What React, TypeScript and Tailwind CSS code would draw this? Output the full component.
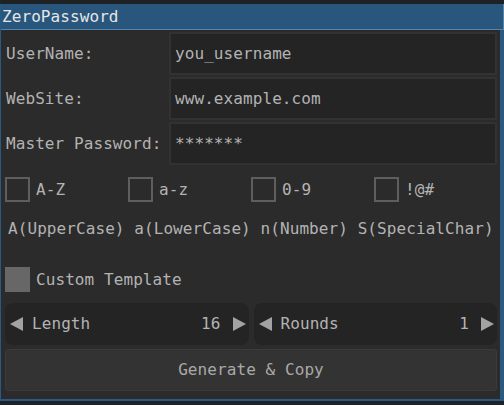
import React from "react"

const fields = [
  { label: "UserName:", value: "you_username" },
  { label: "WebSite:", value: "www.example.com" },
  { label: "Master Password:", value: "*******" },
]

const charsets = ["A-Z", "a-z", "0-9", "!@#"]

function Checkbox({ filled = false }: { filled?: boolean }) {
  return filled ? (
    <div className="h-[25px] w-[25px] shrink-0 bg-[#676767]" />
  ) : (
    <div className="h-[25px] w-[25px] shrink-0 border-2 border-[#5e5e5e] bg-[#2b2b2b]" />
  )
}

function Arrow({ dir }: { dir: "left" | "right" }) {
  return (
    <svg width="13" height="14" viewBox="0 0 13 14" className="shrink-0">
      {dir === "left" ? (
        <polygon points="0,7 13,0 13,14" fill="#a3a3a3" />
      ) : (
        <polygon points="13,7 0,0 0,14" fill="#a3a3a3" />
      )}
    </svg>
  )
}

function Stepper({ label, value }: { label: string; value: number }) {
  return (
    <div className="flex h-[42px] items-center rounded-lg bg-[#242424] pl-[5px] pr-[3px]">
      <Arrow dir="left" />
      <span className="ml-[9px] flex-1">{label}</span>
      <span className="mr-[12px]">{value}</span>
      <Arrow dir="right" />
    </div>
  )
}

export default function App() {
  return (
    <div
      className="h-[405px] w-[504px] overflow-hidden bg-[#1f2225] pt-1 text-[16px] leading-none tracking-[0.08px] text-[#b3b3b3]"
      style={{ fontFamily: '"DejaVu Sans Mono", "Liberation Mono", monospace' }}
    >
      <div className="flex h-[397px] flex-col border-b-2 border-l border-[#2a5a82]">
        <div className="flex h-[26px] items-center border-b border-r border-[#5684ab] bg-[#28567c] pl-[1px] text-[#e6e6e6]">
          ZeroPassword
        </div>
        <div className="flex flex-1 flex-col border-r-4 border-[#2a5a82] bg-[#2b2b2b] pl-[4px] pr-[3px] pt-[2px]">
          <div className="flex flex-col gap-[2px]">
            {fields.map((f) => (
              <div key={f.label} className="flex h-[43px] items-center">
                <span className="w-[164px] pl-[1px]">{f.label}</span>
                <div className="flex h-full flex-1 items-center border-2 border-[#323232] bg-[#242424] pl-[4px]">
                  {f.value}
                </div>
              </div>
            ))}
          </div>

          <div className="mt-[12px] grid grid-cols-4">
            {charsets.map((c) => (
              <div key={c} className="flex items-center gap-[6px]">
                <Checkbox />
                <span>{c}</span>
              </div>
            ))}
          </div>

          <div className="mt-[19px] whitespace-pre pl-[3px]">
            A(UpperCase) a(LowerCase) n(Number) S(SpecialChar)
          </div>

          <div className="mt-[30px] flex items-center gap-[6px]">
            <Checkbox filled />
            <span>Custom Template</span>
          </div>

          <div className="mt-[11px] grid grid-cols-2 gap-[5px]">
            <Stepper label="Length" value={16} />
            <Stepper label="Rounds" value={1} />
          </div>

          <button className="mt-[4px] flex h-[42px] items-center justify-center rounded-[3px] border border-[#3a3a3a] bg-[#333333] text-[#a9a9a9]">
            Generate &amp; Copy
          </button>
        </div>
      </div>
    </div>
  )
}
